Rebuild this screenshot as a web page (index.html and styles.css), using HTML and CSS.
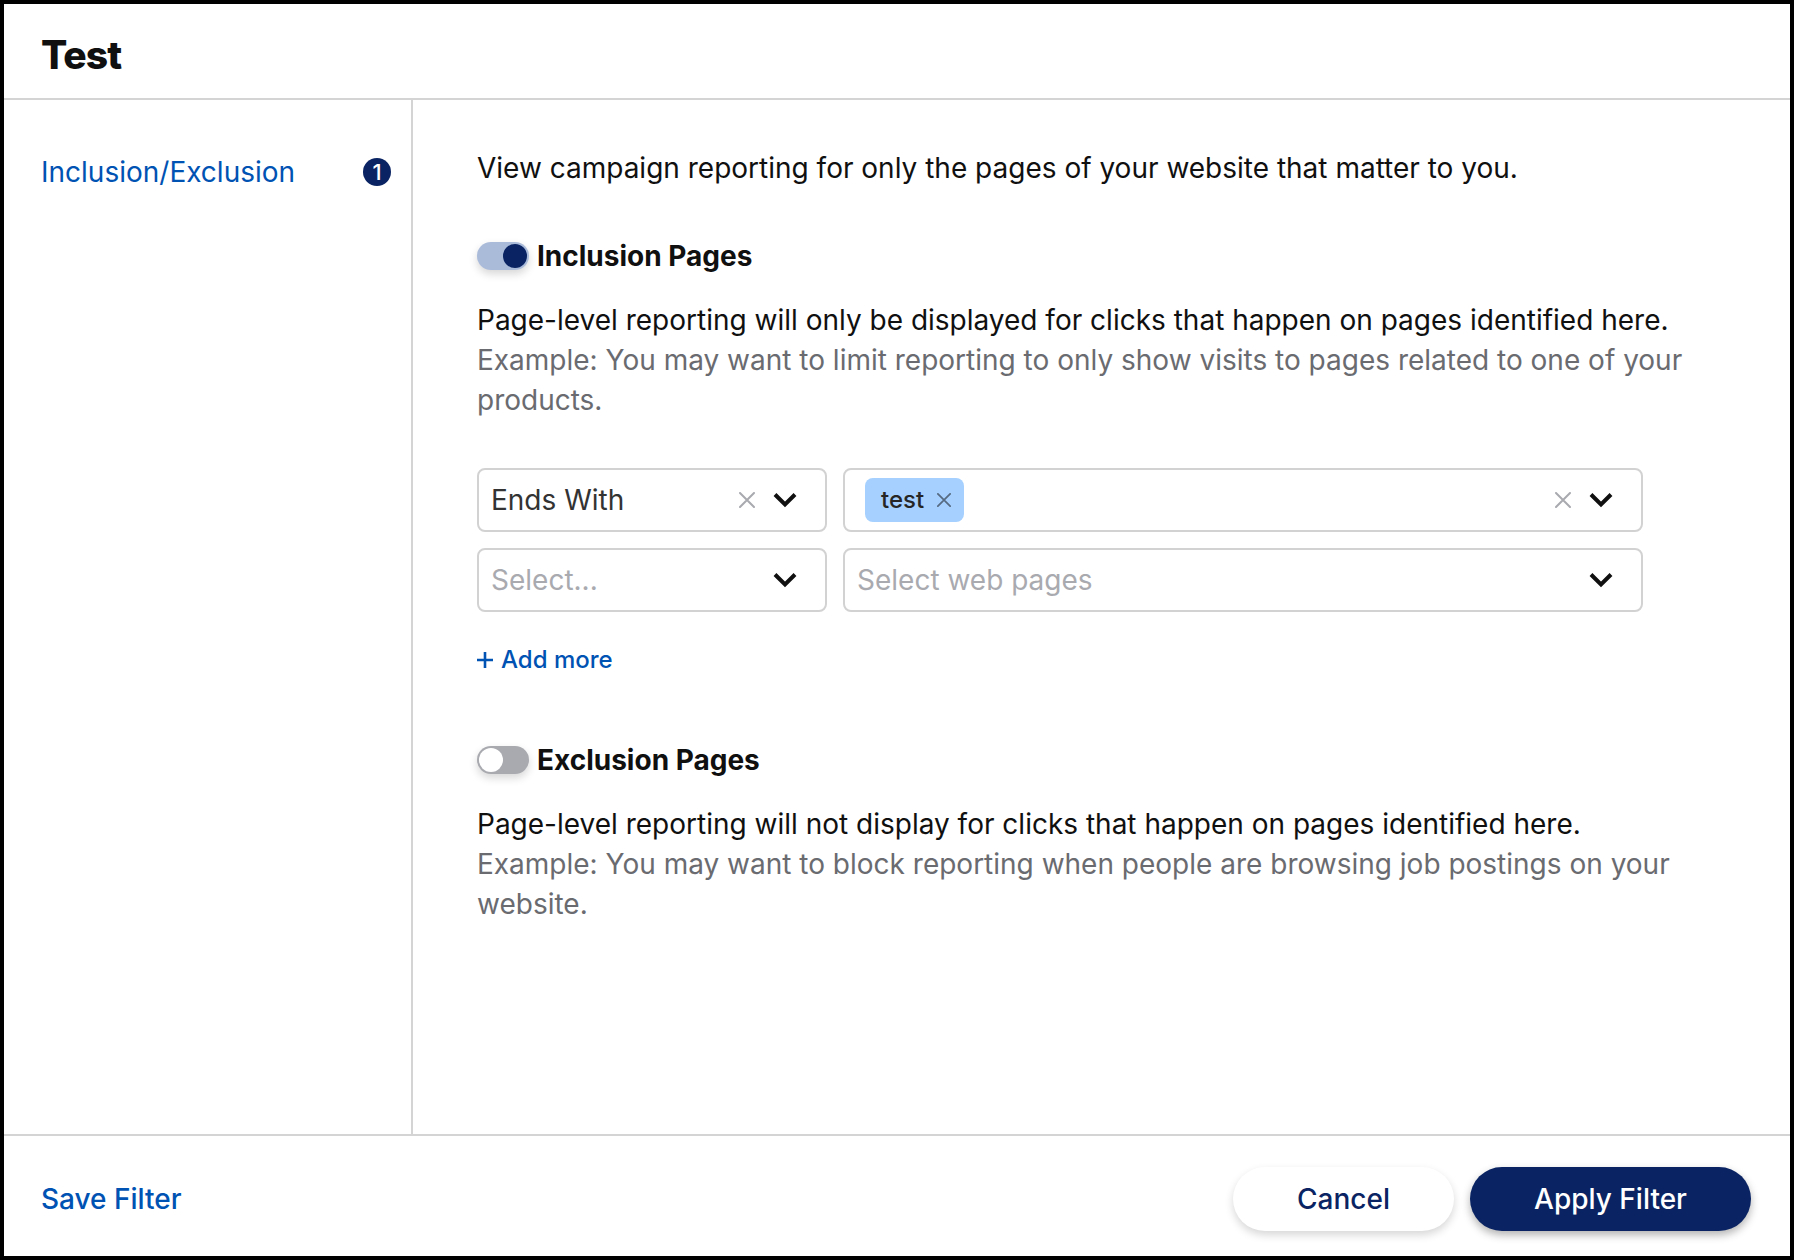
FILE: index.html
```html
<!DOCTYPE html>
<html lang="en">
<head>
<meta charset="utf-8">
<title>Test</title>
<link rel="stylesheet" href="styles.css">
</head>
<body>
<div class="dialog">
  <header class="header"><h1>Test</h1></header>
  <div class="body">
    <nav class="sidebar">
      <a class="tab"><span>Inclusion/Exclusion</span><span class="badge">1</span></a>
    </nav>
    <main class="content">
      <p class="intro">View campaign reporting for only the pages of your website that matter to you.</p>
      <section>
        <div class="toggle-row"><span class="switch on"></span><h2>Inclusion Pages</h2></div>
        <p>Page-level reporting will only be displayed for clicks that happen on pages identified here.</p>
        <p class="example">Example: You may want to limit reporting to only show visits to pages related to one of your products.</p>
        <div class="rules">
          <div class="select"><span class="value">Ends With</span><svg class="clear"><use href="#x"/></svg><svg class="chev"><use href="#chev"/></svg></div>
          <div class="select"><span class="chip">test<svg><use href="#x"/></svg></span><svg class="clear"><use href="#x"/></svg><svg class="chev"><use href="#chev"/></svg></div>
          <div class="select"><span class="placeholder">Select...</span><svg class="chev"><use href="#chev"/></svg></div>
          <div class="select"><span class="placeholder">Select web pages</span><svg class="chev"><use href="#chev"/></svg></div>
        </div>
        <a class="add"><svg><use href="#plus"/></svg>Add more</a>
      </section>
      <section>
        <div class="toggle-row"><span class="switch"></span><h2>Exclusion Pages</h2></div>
        <p>Page-level reporting will not display for clicks that happen on pages identified here.</p>
        <p class="example">Example: You may want to block reporting when people are browsing job postings on your website.</p>
      </section>
    </main>
  </div>
  <footer class="footer">
    <a class="save">Save Filter</a>
    <button class="btn cancel">Cancel</button>
    <button class="btn apply">Apply Filter</button>
  </footer>
</div>
<svg width="0" height="0" class="defs">
  <symbol id="x" viewBox="0 0 16 16"><path d="M1 1 15 15M15 1 1 15" fill="none" stroke="currentColor" stroke-width="2" stroke-linecap="round"/></symbol>
  <symbol id="chev" viewBox="0 0 24 16"><path d="M2 2.5 12 12.5 22 2.5" fill="none" stroke="currentColor" stroke-width="4"/></symbol>
  <symbol id="plus" viewBox="0 0 16 16"><path d="M8 0V16M0 8H16" fill="none" stroke="currentColor" stroke-width="2.6"/></symbol>
</svg>
</body>
</html>
```
FILE: styles.css
```css
* { box-sizing: border-box; margin: 0; }
body { height: 1260px; overflow: hidden; font: 400 28px/40px Inter, sans-serif; color: #101010; background: #fff; }
.defs { display: block; height: 0; }
svg { flex: none; }
.dialog { display: flex; flex-direction: column; width: 1794px; height: 1260px; border: 4px solid #000; }
.header { height: 96px; padding: 26px 37px 0; border-bottom: 2px solid #d4d4d4; }
h1 { font-size: 39px; line-height: 50px; font-weight: 800; letter-spacing: -1px; }
.body { flex: 1; display: flex; }
.sidebar { width: 409px; padding: 52px 20px 0 37px; border-right: 2px solid #d4d4d4; }
.tab { display: flex; align-items: center; justify-content: space-between; color: #0052b3; }
.badge { width: 28px; height: 28px; border-radius: 50%; background: #0a2463; color: #fff; font-size: 22px; line-height: 28px; font-weight: 500; text-align: center; }
.content { flex: 1; padding: 48px 80px 0 64px; }
.toggle-row { display: flex; align-items: center; gap: 8px; margin-bottom: 24px; }
.intro { margin-bottom: 48px; }
h2 { font-size: 28px; line-height: 40px; font-weight: 700; }
.switch { display: flex; width: 52px; height: 28px; padding: 2px; border-radius: 14px; background: #a9aab0; box-shadow: 0 4px 8px rgba(0,0,0,.16); }
.switch::before { content: ""; width: 24px; height: 24px; border-radius: 50%; background: #fff; }
.switch.on { justify-content: flex-end; background: #aabbda; }
.switch.on::before { background: #0a2463; }
.example { color: #6a6b70; }
.rules { display: grid; grid-template-columns: 350px 800px; gap: 16px; margin: 48px 0 28px; }
.select { display: flex; align-items: center; height: 64px; padding: 0 28px 0 12px; border: 2px solid #d2d2d2; border-radius: 8px; }
.value { color: #333; }
.placeholder { color: #a9aab0; }
.chev { width: 24px; height: 16px; margin-left: auto; color: #101010; }
.clear { width: 16px; height: 16px; margin-left: auto; color: #a9aab0; }
.clear + .chev { margin-left: 18px; }
.chip { display: flex; align-items: center; gap: 13px; height: 44px; margin-left: 8px; padding: 0 13px 0 16px; border-radius: 8px; background: #a5d0ff; color: #262626; font-size: 24px; font-weight: 500; }
.chip svg { width: 14px; height: 14px; color: #566b82; }
.add { display: flex; align-items: center; gap: 8px; height: 40px; margin-bottom: 60px; color: #0052b3; font-size: 24px; font-weight: 500; }
.add svg { width: 16px; height: 16px; }
.footer { display: flex; align-items: center; height: 122px; padding: 6px 39px 0 37px; border-top: 2px solid #d4d4d4; gap: 16px; }
.save { margin-right: auto; color: #0052b3; font-weight: 500; }
.btn { height: 64px; border: 0; border-radius: 32px; padding: 0; font: inherit; font-weight: 500; }
.cancel { width: 221px; background: #fff; color: #0a2463; box-shadow: 0 4px 8px rgba(0,0,0,.16); }
.apply { width: 281px; background: #0a2463; color: #fff; box-shadow: 0 4px 8px rgba(0,0,0,.3); }
```
